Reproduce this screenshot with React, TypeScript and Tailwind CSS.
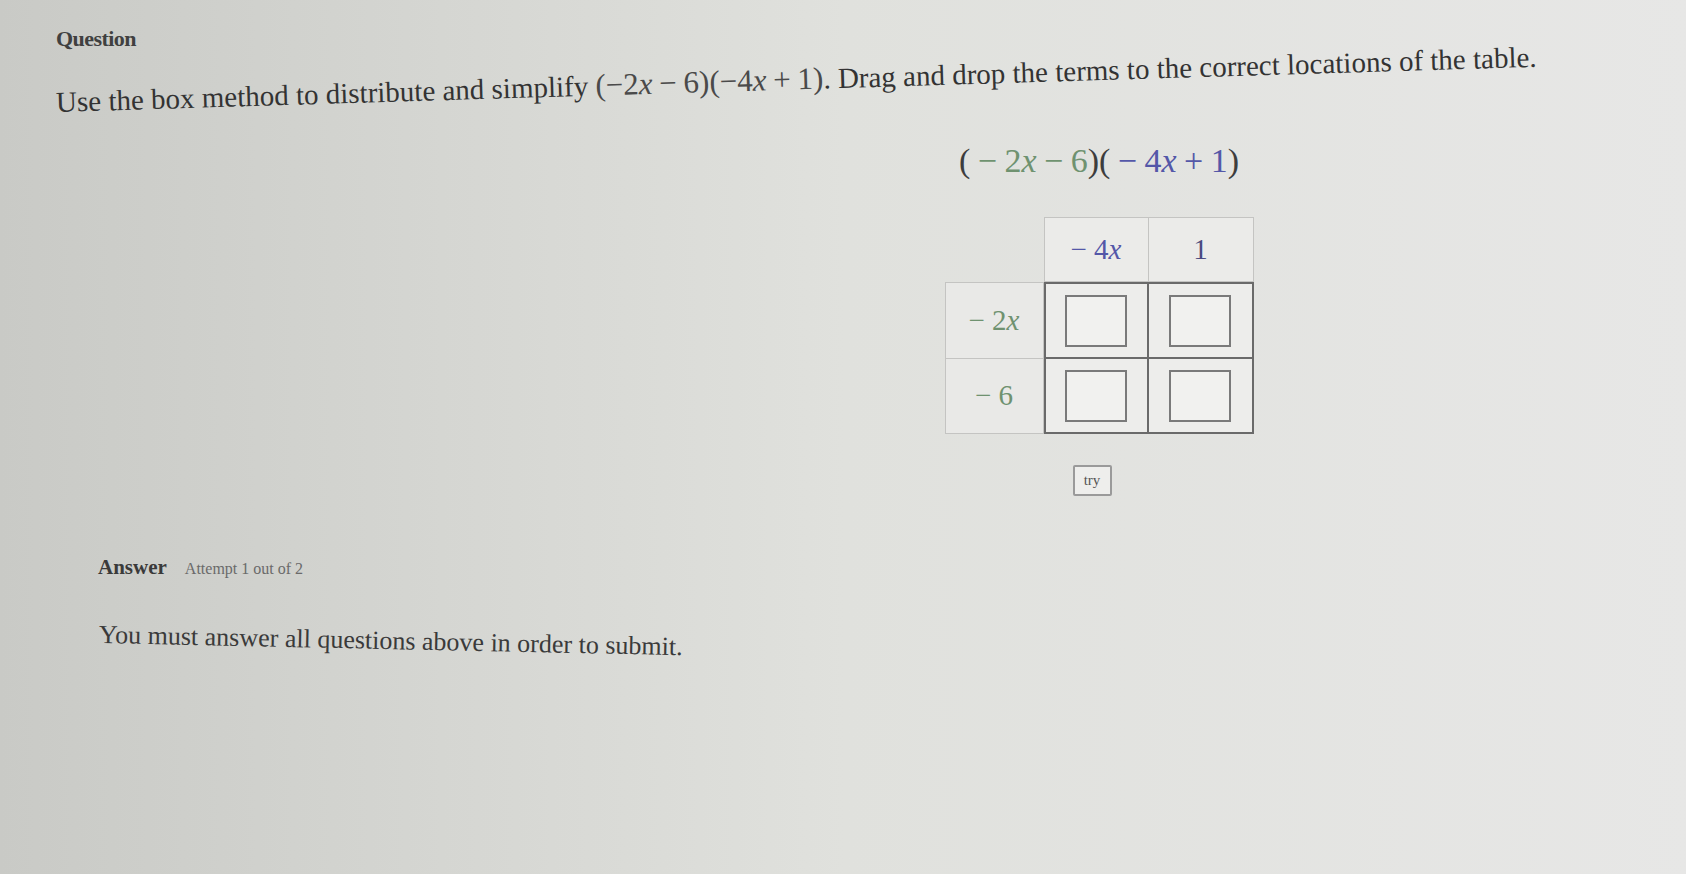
const serif = { fontFamily: '"Liberation Serif", "DejaVu Serif", serif' };

function V({ children }: { children: React.ReactNode }) {
  return <span className="italic">{children}</span>;
}

// binary operator with KaTeX-like spacing
function Op({ children }: { children: React.ReactNode }) {
  return <span className="mx-[0.22em]">{children}</span>;
}

function DropBox() {
  return <div className="h-[52px] w-[62px] border-2 border-[#7a7a7a] bg-[#f1f1ef]" />;
}

export default function App() {
  return (
    <div
      className="min-h-[874px] w-full overflow-hidden bg-gradient-to-r from-[#c9cac6] via-[#e0e1dd] to-[#e7e7e6] text-[#383838]"
      style={serif}
    >
      <div className="flex min-h-[874px] flex-col pl-[56px] pt-[22px]">
        <div className="text-[22px] font-bold tracking-tight text-[#404040]">Question</div>

        <p className="mt-[30px] origin-left -rotate-[1.75deg] whitespace-nowrap text-[29px] leading-[34px] text-[#333]">
          Use the box method to distribute and simplify{' '}
          <span className="text-[31px] text-[#4a4a4a]">
            (−2<V>x</V>
            <Op>−</Op>6)(−4<V>x</V>
            <Op>+</Op>1)
          </span>
          . Drag and drop the terms to the correct locations of the table.
        </p>

        <div className="ml-[888px] mt-[20px] flex w-[310px] flex-col items-center">
          <div className="whitespace-nowrap text-[34px] leading-[44px] text-[#3d3d3d]">
            (
            <span className="text-[#6f9270]">
              <Op>−</Op>2<V>x</V>
              <Op>−</Op>6
            </span>
            )(
            <span className="text-[#5457a8]">
              <Op>−</Op>4<V>x</V>
              <Op>+</Op>1
            </span>
            )
          </div>

          <div className="mt-[34px] grid grid-cols-[99px_105px_105px] grid-rows-[65px_77px_75px] text-[29px]">
            <div />
            <div className="flex items-center justify-center border border-[#c4c4c2] bg-[#ebebe9] text-[#5457a8]">
              <span className="mr-[0.25em]">−</span>4<V>x</V>
            </div>
            <div className="flex items-center justify-center border border-l-0 border-[#c4c4c2] bg-[#ebebe9] text-[#4a4a80]">
              1
            </div>
            <div className="flex items-center justify-center border border-[#c4c4c2] bg-[#e9e9e7] text-[#6f9270]">
              <span className="mr-[0.25em]">−</span>2<V>x</V>
            </div>
            <div className="flex items-center justify-center border-2 border-[#6a6a6a] bg-[#ededeb]">
              <DropBox />
            </div>
            <div className="flex items-center justify-center border-2 border-l-0 border-[#6a6a6a] bg-[#ededeb]">
              <DropBox />
            </div>
            <div className="flex items-center justify-center border border-t-0 border-[#c4c4c2] bg-[#e9e9e7] text-[#6f9270]">
              <span className="mr-[0.25em]">−</span>6
            </div>
            <div className="flex items-center justify-center border-2 border-t-0 border-[#6a6a6a] bg-[#ededeb]">
              <DropBox />
            </div>
            <div className="flex items-center justify-center border-2 border-l-0 border-t-0 border-[#6a6a6a] bg-[#ededeb]">
              <DropBox />
            </div>
          </div>

          <button className="mr-[14px] mt-[31px] flex h-[31px] w-[39px] items-center justify-center rounded-[2px] border-2 border-[#9a9a9a] bg-[#eeeeec] text-[15px] text-[#555]">
            try
          </button>
        </div>

        <div className="ml-[42px] mt-[56px] flex items-baseline gap-[18px]">
          <span className="text-[21px] font-bold text-[#3a3a3a]">Answer</span>
          <span className="text-[16px] text-[#6a6a6a]">Attempt 1 out of 2</span>
        </div>

        <p className="ml-[43px] mt-[31px] origin-left rotate-[1.2deg] whitespace-nowrap text-[26px] text-[#3a3a3a]">
          You must answer all questions above in order to submit.
        </p>
      </div>
    </div>
  );
}
